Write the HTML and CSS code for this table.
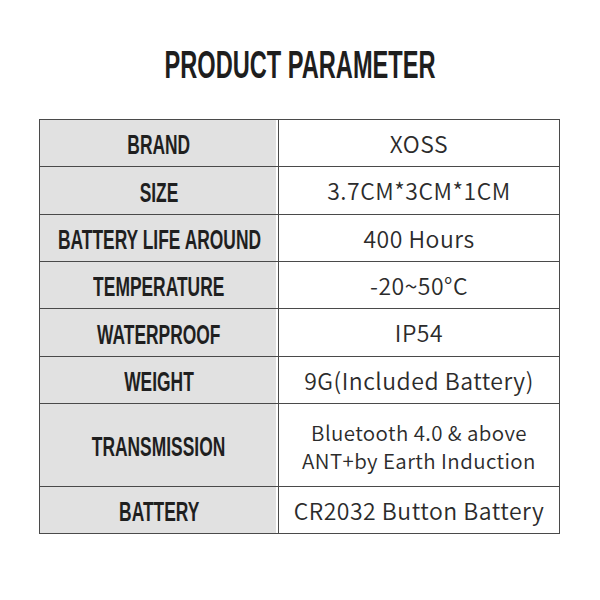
FILE: index.html
```html
<!DOCTYPE html>
<html>
<head>
<meta charset="utf-8">
<link rel="stylesheet" href="styles.css">
</head>
<body>
<div class="page">
  <h1 class="title"><span class="squeeze">PRODUCT PARAMETER</span></h1>
  <table class="params">
    <tr class="r1"><th><div class="lbl"><span class="squeeze">BRAND</span></div></th><td>XOSS</td></tr>
    <tr class="r2"><th><div class="lbl"><span class="squeeze">SIZE</span></div></th><td>3.7CM*3CM*1CM</td></tr>
    <tr class="r3"><th><div class="lbl"><span class="squeeze">BATTERY LIFE AROUND</span></div></th><td>400 Hours</td></tr>
    <tr class="r4"><th><div class="lbl"><span class="squeeze">TEMPERATURE</span></div></th><td>-20~50°C</td></tr>
    <tr class="r5"><th><div class="lbl"><span class="squeeze">WATERPROOF</span></div></th><td>IP54</td></tr>
    <tr class="r6"><th><div class="lbl"><span class="squeeze">WEIGHT</span></div></th><td>9G(Included Battery)</td></tr>
    <tr class="r7"><th><div class="lbl"><span class="squeeze">TRANSMISSION</span></div></th><td><div class="line">Bluetooth 4.0 &amp; above</div><div class="line">ANT+by Earth Induction</div></td></tr>
    <tr class="r8"><th><div class="lbl"><span class="squeeze">BATTERY</span></div></th><td>CR2032 Button Battery</td></tr>
  </table>
</div>
</body>
</html>
```
FILE: styles.css
```css
html, body {
  margin: 0;
  padding: 0;
  background: #ffffff;
}
.page {
  width: 600px;
  height: 600px;
  padding-top: 41px;
  box-sizing: border-box;
}
.title {
  margin: 0;
  height: 78px;
  display: flex;
  justify-content: center;
  font-family: "Liberation Sans", sans-serif;
  font-weight: bold;
  font-size: 38.5px;
  line-height: 48px;
  color: #1e1e1e;
  white-space: nowrap;
}
.squeeze {
  display: inline-block;
  white-space: nowrap;
  transform-origin: center;
  flex: none;
}
.title .squeeze {
  transform: scaleX(0.613);
}
.params {
  margin-left: 39px;
  width: 521px;
  border-collapse: collapse;
  border: 1px solid #4a4a4a;
  table-layout: fixed;
}
.params th,
.params td {
  border: 1px solid #4a4a4a;
  padding: 0;
  text-align: center;
  vertical-align: middle;
}
.params th {
  width: 238px;
  background: #e1e1e1;
  box-shadow: inset -2px 0 0 #ffffff;
  font-family: "Liberation Sans", sans-serif;
  font-weight: bold;
  font-size: 27px;
  line-height: 30px;
  color: #1f1f1f;
  padding-top: 4px;
}
.lbl {
  display: flex;
  justify-content: center;
}
.params th .squeeze {
  transform: scaleX(0.645);
}
.params td {
  background: #ffffff;
  font-family: "Noto Sans CJK SC", "Noto Sans", sans-serif;
  font-weight: 350;
  font-size: 23px;
  letter-spacing: 0.5px;
  line-height: 27.5px;
  color: #2b2b2b;
  padding-top: 1px;
}
.params .r7 td {
  font-size: 20.5px;
  letter-spacing: 0.4px;
  padding-top: 2px;
}
.line {
  height: 28px;
  line-height: 28px;
  overflow: visible;
}
.r1 { height: 47px; }
.r2 { height: 48px; }
.r3 { height: 47px; }
.r4 { height: 47px; }
.r5 { height: 48px; }
.r6 { height: 47px; }
.r7 { height: 83px; }
.r8 { height: 47px; }
```
